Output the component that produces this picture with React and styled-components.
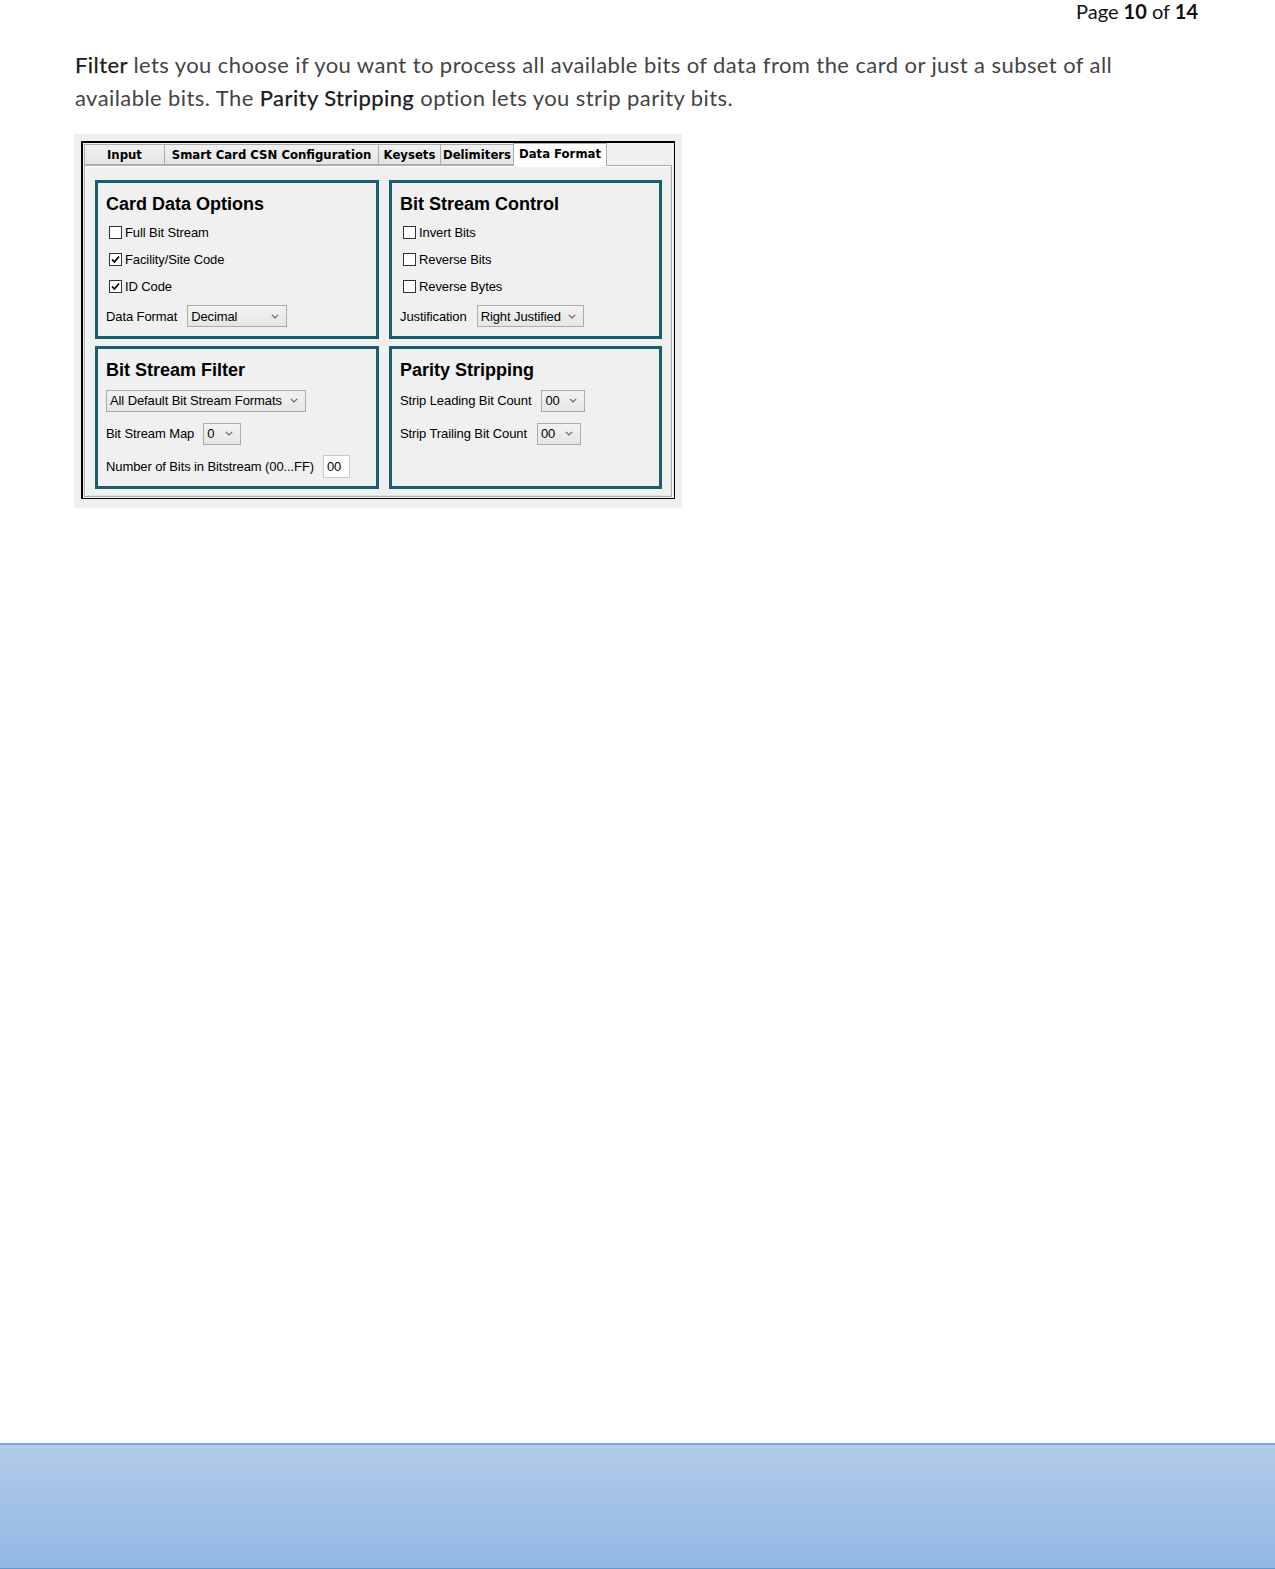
import React from "react";
import styled, { createGlobalStyle } from "styled-components";

const GlobalStyle = createGlobalStyle`
  html, body {
    margin: 0;
    padding: 0;
    background: #fff;
  }
`;

const Page = styled.div`
  width: 1275px;
  height: 1569px;
  display: flex;
  flex-direction: column;
  background: #fff;
  overflow: hidden;
`;

const Header = styled.div`
  height: 22px;
  padding-right: 77px;
  text-align: right;
  font-family: Lato, "Liberation Sans", sans-serif;
  font-size: 20px;
  line-height: 22px;
  color: #111;

  b {
    font-weight: 700;
  }
`;

const Body = styled.div`
  padding: 26px 0 0 75px;
  flex: 1;
`;

const Paragraph = styled.p`
  margin: 0 0 20px;
  font-family: Lato, "Liberation Sans", sans-serif;
  font-size: 22px;
  line-height: 33px;
  letter-spacing: 0.42px;
  color: #444;

  b {
    font-weight: 400;
    color: #1a1a1a;
    -webkit-text-stroke: 0.25px #1a1a1a;
  }
`;

const Shot = styled.div`
  width: 608px;
  height: 374px;
  margin-left: -1px;
  background: #efefef;
  padding: 7px;
  box-sizing: border-box;
`;

const Frame = styled.div`
  width: 594px;
  height: 358px;
  box-sizing: border-box;
  border: 2px solid #000;
  border-right-width: 1px;
  border-bottom-width: 1px;
  padding: 0 2px 2px 1px;
  display: flex;
  flex-direction: column;
  background: #f0f0f0;
`;

const TabStrip = styled.div`
  display: flex;
  align-items: flex-end;
  height: 23px;
  position: relative;
  z-index: 2;
`;

const Tab = styled.div`
  height: ${(p) => (p.$active ? "23px" : "21px")};
  width: ${(p) => p.$w}px;
  box-sizing: border-box;
  border: 1px solid #acacac;
  border-bottom: ${(p) => (p.$active ? "none" : "1px solid #acacac")};
  margin-left: -1px;
  background: ${(p) =>
    p.$active ? "#fff" : "linear-gradient(#f0f0f0, #e5e5e5)"};
  display: flex;
  align-items: center;
  justify-content: center;
  font-family: "DejaVu Sans", Verdana, sans-serif;
  font-weight: 700;
  font-size: 11.7px;
  color: #000;
  margin-bottom: ${(p) => (p.$active ? "-1px" : "0")};
  padding-bottom: ${(p) => (p.$active ? "2px" : "0")};

  &:first-child {
    margin-left: 0;
  }
`;

const Panel = styled.div`
  flex: 1;
  border: 1px solid #adadad;
  box-shadow: inset 1px 1px 0 #fff, inset -1px -1px 0 #e3e3e3;
  background: #f0f0f0;
  padding: 14px 10px 7px 10px;
  display: grid;
  grid-template-columns: 284px 273px;
  grid-template-rows: 159px 143px;
  column-gap: 10px;
  row-gap: 7px;
`;

const Group = styled.div`
  border: 3px solid #175f6c;
  box-sizing: border-box;
  padding: 10px 8px 0 8px;
  display: flex;
  flex-direction: column;
`;

const GroupTitle = styled.div`
  font-family: "Liberation Sans", Arial, sans-serif;
  font-weight: 700;
  font-size: 18px;
  line-height: 22px;
  color: #000;
  margin-bottom: ${(p) => p.$mb || 4}px;
`;

const Label = styled.span`
  font-family: "Liberation Sans", Arial, sans-serif;
  font-size: 13px;
  letter-spacing: -0.1px;
  color: #000;
  white-space: nowrap;
`;

const CheckRow = styled.label`
  display: flex;
  align-items: center;
  gap: 3px;
  height: 27px;
  padding-left: 3px;
`;

const Box = styled.span`
  width: 11px;
  height: 11px;
  border: 1px solid #333;
  background: #fff;
  display: flex;
  align-items: center;
  justify-content: center;
  flex-shrink: 0;
`;

const FieldRow = styled.div`
  display: flex;
  align-items: center;
  gap: ${(p) => p.$gap || 10}px;
  height: ${(p) => p.$h || 33}px;
`;

const Combo = styled.div`
  width: ${(p) => p.$w}px;
  height: 22px;
  box-sizing: border-box;
  border: 1px solid #acacac;
  background: linear-gradient(#f2f2f2, #e6e6e6);
  display: flex;
  align-items: center;
  justify-content: space-between;
  padding: 0 7px 0 3px;
  flex-shrink: 0;
`;

const TextBox = styled.div`
  width: 27px;
  height: 23px;
  box-sizing: border-box;
  border: 1px solid #c8c8c8;
  background: #fff;
  display: flex;
  align-items: center;
  padding-left: 3px;
`;

const Footer = styled.div`
  height: 123px;
  border-top: 2px solid #78a9d9;
  border-bottom: 1px solid #5f9ad6;
  background: linear-gradient(#b2cbe9, #93b8e5);
`;

const Check = () => (
  <svg width="9" height="9" viewBox="0 0 9 9">
    <path d="M1 4.5 L3.4 7 L8 1.5" fill="none" stroke="#000" strokeWidth="1.8" />
  </svg>
);

const Chevron = () => (
  <svg width="8" height="5" viewBox="0 0 8 5">
    <path d="M0.8 0.8 L4 4 L7.2 0.8" fill="none" stroke="#666" strokeWidth="1.2" />
  </svg>
);

function CheckItem({ checked, children }) {
  return (
    <CheckRow>
      <Box>{checked && <Check />}</Box>
      <Label>{children}</Label>
    </CheckRow>
  );
}

function Select({ w, value }) {
  return (
    <Combo $w={w}>
      <Label>{value}</Label>
      <Chevron />
    </Combo>
  );
}

const tabs = [
  { name: "Input", w: 81 },
  { name: "Smart Card CSN Configuration", w: 215 },
  { name: "Keysets", w: 63 },
  { name: "Delimiters", w: 74 },
  { name: "Data Format", w: 94, active: true },
];

export default function App() {
  return (
    <Page>
      <GlobalStyle />
      <Header>
        Page <b>10</b> of <b>14</b>
      </Header>
      <Body>
        <Paragraph>
          <b>Filter</b> lets you choose if you want to process all available bits of
          data from the card or just a subset of all
          <br />
          available bits. The <b>Parity Stripping</b> option lets you strip parity
          bits.
        </Paragraph>
        <Shot>
          <Frame>
            <TabStrip>
              {tabs.map((t) => (
                <Tab key={t.name} $w={t.w} $active={t.active}>
                  {t.name}
                </Tab>
              ))}
            </TabStrip>
            <Panel>
              <Group>
                <GroupTitle>Card Data Options</GroupTitle>
                <CheckItem>Full Bit Stream</CheckItem>
                <CheckItem checked>Facility/Site Code</CheckItem>
                <CheckItem checked>ID Code</CheckItem>
                <FieldRow $h={32}>
                  <Label>Data Format</Label>
                  <Select w={100} value="Decimal" />
                </FieldRow>
              </Group>
              <Group>
                <GroupTitle>Bit Stream Control</GroupTitle>
                <CheckItem>Invert Bits</CheckItem>
                <CheckItem>Reverse Bits</CheckItem>
                <CheckItem>Reverse Bytes</CheckItem>
                <FieldRow $h={32}>
                  <Label>Justification</Label>
                  <Select w={107} value="Right Justified" />
                </FieldRow>
              </Group>
              <Group>
                <GroupTitle $mb={3}>Bit Stream Filter</GroupTitle>
                <FieldRow>
                  <Select w={200} value="All Default Bit Stream Formats" />
                </FieldRow>
                <FieldRow $gap={9}>
                  <Label>Bit Stream Map</Label>
                  <Select w={38} value="0" />
                </FieldRow>
                <FieldRow $gap={9}>
                  <Label>Number of Bits in Bitstream (00...FF)</Label>
                  <TextBox>
                    <Label>00</Label>
                  </TextBox>
                </FieldRow>
              </Group>
              <Group>
                <GroupTitle $mb={3}>Parity Stripping</GroupTitle>
                <FieldRow>
                  <Label>Strip Leading Bit Count</Label>
                  <Select w={44} value="00" />
                </FieldRow>
                <FieldRow>
                  <Label>Strip Trailing Bit Count</Label>
                  <Select w={44} value="00" />
                </FieldRow>
              </Group>
            </Panel>
          </Frame>
        </Shot>
      </Body>
      <Footer />
    </Page>
  );
}
